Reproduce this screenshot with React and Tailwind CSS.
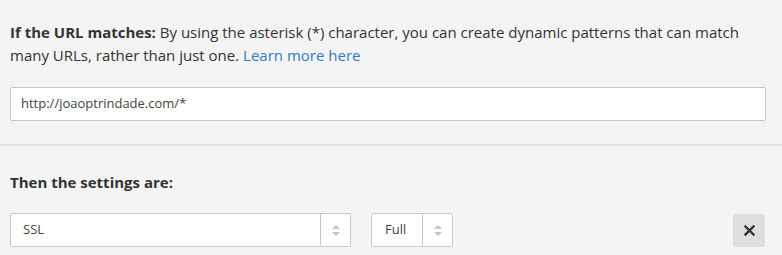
export default function App() {
    const Spinner = () => (
        <div className="w-[30px] self-stretch flex flex-col items-center justify-center gap-[3px] border-l border-[#c8c8c8]">
            <svg width="8" height="4" viewBox="0 0 8 4"><path d="M0 4 L4 0 L8 4 Z" fill="#c4c4c4" /></svg>
            <svg width="8" height="4" viewBox="0 0 8 4"><path d="M0 0 L4 4 L8 0 Z" fill="#c4c4c4" /></svg>
        </div>
    );

    return (
        <div className="w-[782px] h-[255px] bg-[#f4f4f4] text-[#333] text-[15px] overflow-hidden font-['Open_Sans',sans-serif]">
            {/* URL pattern section */}
            <div className="pt-[21px] pb-[23px] px-[10px] border-b-2 border-[#e2e2e2]">
                <p className="leading-[23px] pr-[20px]">
                    <strong className="font-bold">If the URL matches:</strong> By using the asterisk (*) character, you can create dynamic patterns that can match many URLs, rather than just one.{" "}
                    <a href="#" className="text-[#2f7bbf]">Learn more here</a>
                </p>
                <div className="mt-[20px] w-[756px] h-[34px] bg-white border border-[#c8c8c8] rounded-[2px] flex items-center px-[10px] text-[13px] text-[#444]">
                    http://joaoptrindade.com/*
                </div>
            </div>

            {/* Settings section */}
            <div className="pt-[25px] px-[10px]">
                <p className="leading-[23px] font-bold">Then the settings are:</p>
                <div className="mt-[19px] flex items-center text-[13px]">
                    <div className="w-[341px] h-[34px] bg-white border border-[#c8c8c8] rounded-[2px] flex items-center">
                        <span className="flex-1 pl-[12px] text-[#444]">SSL</span>
                        <Spinner />
                    </div>
                    <div className="ml-[20px] w-[82px] h-[34px] bg-white border border-[#c8c8c8] rounded-[2px] flex items-center">
                        <span className="flex-1 pl-[13px] text-[#444]">Full</span>
                        <Spinner />
                    </div>
                    <button className="ml-auto mr-[7px] w-[32px] h-[33px] bg-[#dedede] rounded-[2px] flex items-center justify-center">
                        <svg width="11" height="11" viewBox="0 0 11 11">
                            <path d="M1.5 1.5 L9.5 9.5 M9.5 1.5 L1.5 9.5" stroke="#333" strokeWidth="2.4" strokeLinecap="square" />
                        </svg>
                    </button>
                </div>
            </div>
        </div>
    );
}
